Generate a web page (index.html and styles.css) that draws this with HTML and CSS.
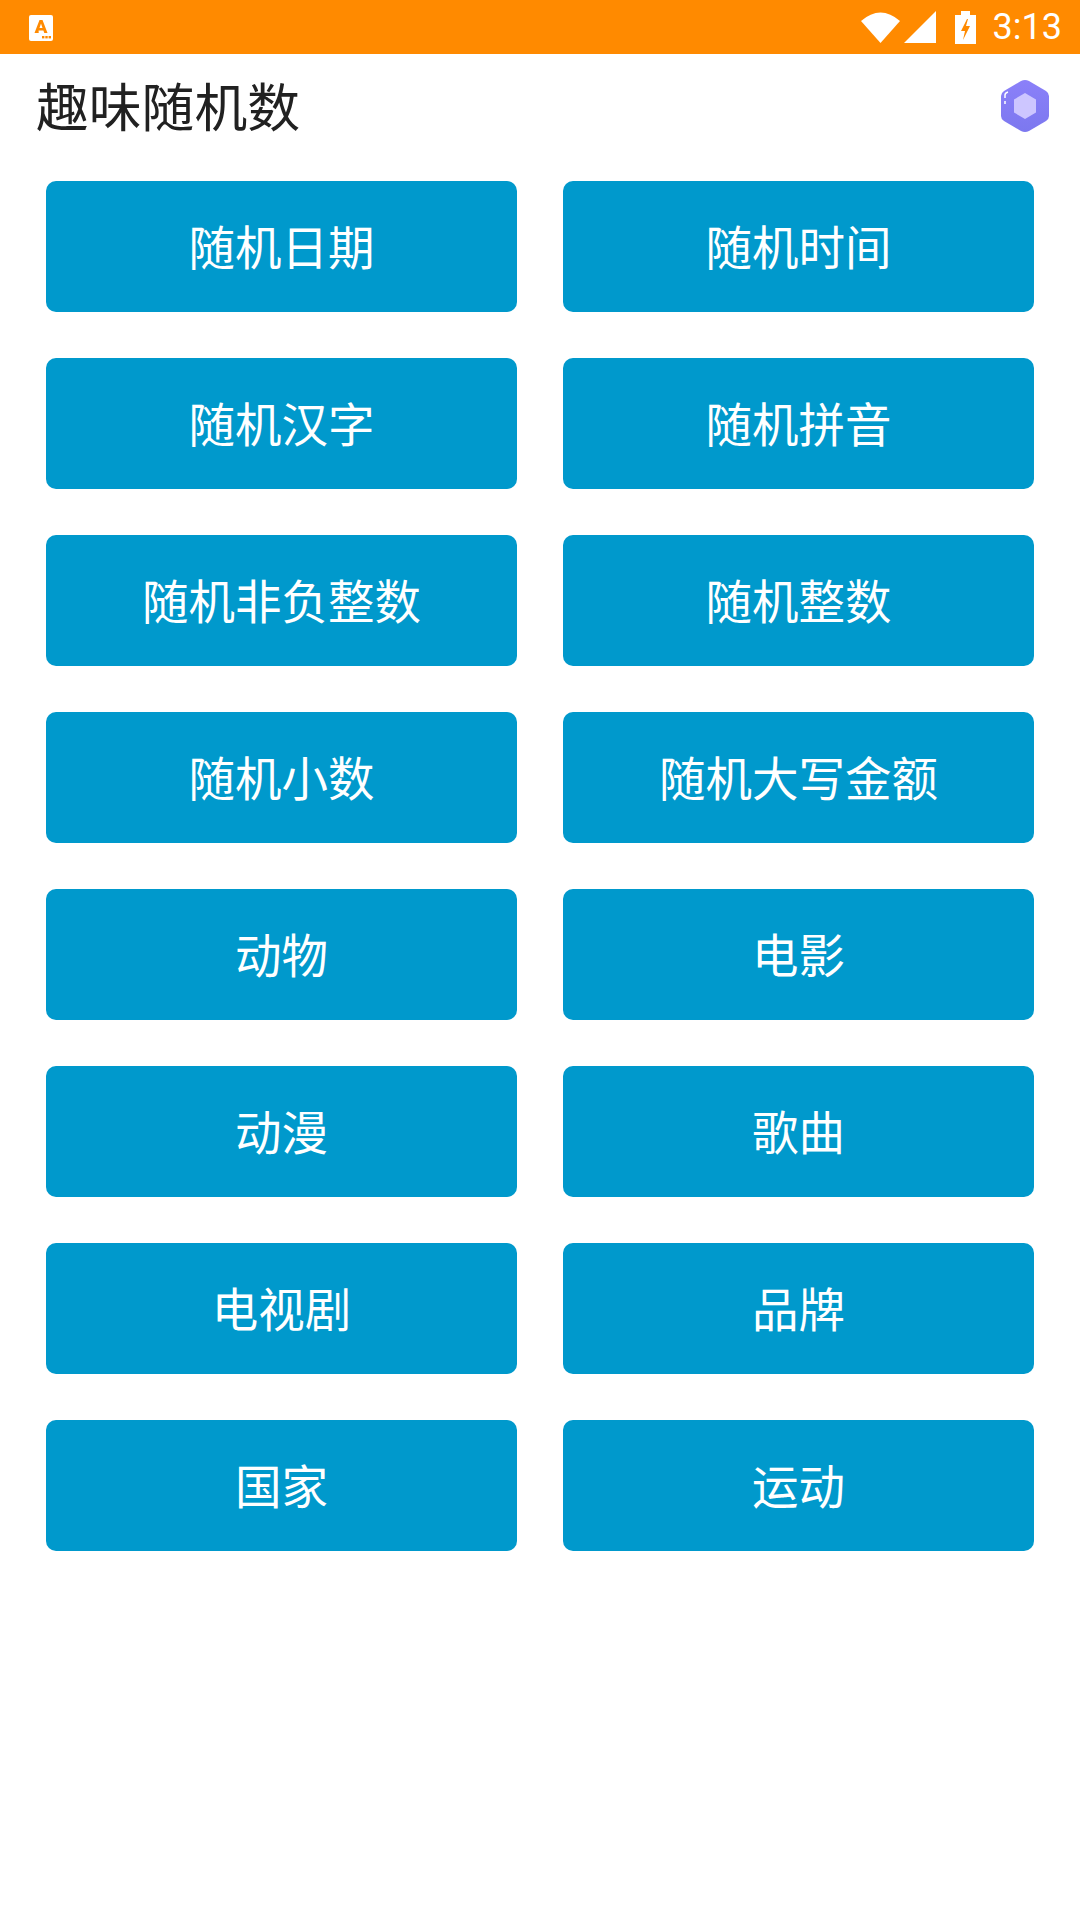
FILE: index.html
```html
<!DOCTYPE html>
<html lang="zh-CN">
<head>
    <meta charset="UTF-8">
    <title>趣味随机数</title>
    <link rel="stylesheet" href="styles.css">
</head>
<body>
    <!-- 状态栏 -->
    <div class="status-bar">
        <svg class="app-icon" width="24" height="26" viewBox="0 0 24 26">
            <rect width="24" height="26" rx="2" fill="#fff"/>
            <path d="M5.500 18 L10.500 5 h3 L18.500 18 h-3.200 l-.9-2.600 h-4.800 L9.700 18 Z M10.500 13 h3 L12 8.500 Z" fill="#ff8a00"/>
            <rect x="13" y="21" width="2.400" height="2.400" fill="#ff8a00"/>
            <rect x="16.300" y="21" width="2.400" height="2.400" fill="#ff8a00"/>
            <rect x="19.600" y="21" width="2.400" height="2.400" fill="#ff8a00"/>
        </svg>
        <div class="status-right">
            <svg width="39" height="32" viewBox="0 0 39 32"><path d="M0 10 Q19.500 -7 39 10 L19.500 32 Z" fill="#fff"/></svg>
            <svg class="signal" width="32" height="32" viewBox="0 0 32 32"><path d="M0 32 L32 0 V32 Z" fill="#fff"/></svg>
            <svg class="battery" width="21" height="33" viewBox="0 0 21 33">
                <path d="M0 4 H6 V0 H15 V4 H21 V33 H0 Z" fill="#fff"/>
                <path d="M12 8 L6 20 H10 L8 29 L15 15 H11 L13 8 Z" fill="#ff8a00"/>
            </svg>
            <span class="clock">3:13</span>
        </div>
    </div>

    <!-- 标题栏 -->
    <div class="title-bar">
        <h1>趣味随机数</h1>
        <svg class="hex-icon" width="50" height="54" viewBox="0 0 50 54">
            <defs>
                <linearGradient id="hexFill" x1="0" y1="0" x2="0" y2="1">
                    <stop offset="0" stop-color="#8b80f9"/>
                    <stop offset="1" stop-color="#7c78ef"/>
                </linearGradient>
            </defs>
            <path d="M25 1 Q27 1 29 2 L46 12 Q49 14 49 17 V37 Q49 40 46 42 L29 52 Q25 54 21 52 L4 42 Q1 40 1 37 V17 Q1 14 4 12 L21 2 Q23 1 25 1 Z" fill="url(#hexFill)"/>
            <path d="M25 14 L36 20.500 V33.500 L25 40 L14 33.500 V20.500 Z" fill="#cdc6ff"/>
            <path d="M5 25 V22 M5 19 V16 Q5 14 8 13" stroke="#fff" stroke-width="1.500" fill="none"/>
        </svg>
    </div>

    <!-- 按钮 -->
    <div class="grid">
        <button>随机日期</button>
        <button>随机时间</button>
        <button>随机汉字</button>
        <button>随机拼音</button>
        <button>随机非负整数</button>
        <button>随机整数</button>
        <button>随机小数</button>
        <button>随机大写金额</button>
        <button>动物</button>
        <button>电影</button>
        <button>动漫</button>
        <button>歌曲</button>
        <button>电视剧</button>
        <button>品牌</button>
        <button>国家</button>
        <button>运动</button>
    </div>
</body>
</html>
```

FILE: styles.css
```css
body {
    margin: 0;
    width: 1080px;
    height: 1920px;
    overflow: hidden;
    background-color: #fff;
    font-family: "Noto Sans CJK SC", "Roboto", sans-serif;
}

.status-bar {
    height: 54px;
    background-color: #ff8a00;
    display: flex;
    align-items: center;
    justify-content: space-between;
    padding: 0 18px 0 29px;
}

.app-icon {
    margin-top: 1px;
}

.status-right {
    display: flex;
    align-items: center;
}

.signal {
    margin-left: 4px;
}

.battery {
    margin-left: 19px;
}

.clock {
    margin-left: 17px;
    font-family: "Roboto", sans-serif;
    font-size: 36px;
    color: #fff;
}

.title-bar {
    height: 104px;
    display: flex;
    align-items: center;
    justify-content: space-between;
    padding: 0 30px 4px 36px;
    box-sizing: border-box;
}

h1 {
    margin: 0;
    font-size: 52.8px;
    font-weight: 400;
    color: #212121;
}

.hex-icon {
    margin-top: 4px;
}

.grid {
    display: grid;
    grid-template-columns: 471px 471px;
    grid-auto-rows: 131px;
    gap: 46px;
    padding: 23px 46px;
}

button {
    border: none;
    border-radius: 10px;
    background-color: #0099cc;
    color: #fff;
    font-family: inherit;
    font-size: 46.5px;
    padding: 0 0 5px;
}
```
